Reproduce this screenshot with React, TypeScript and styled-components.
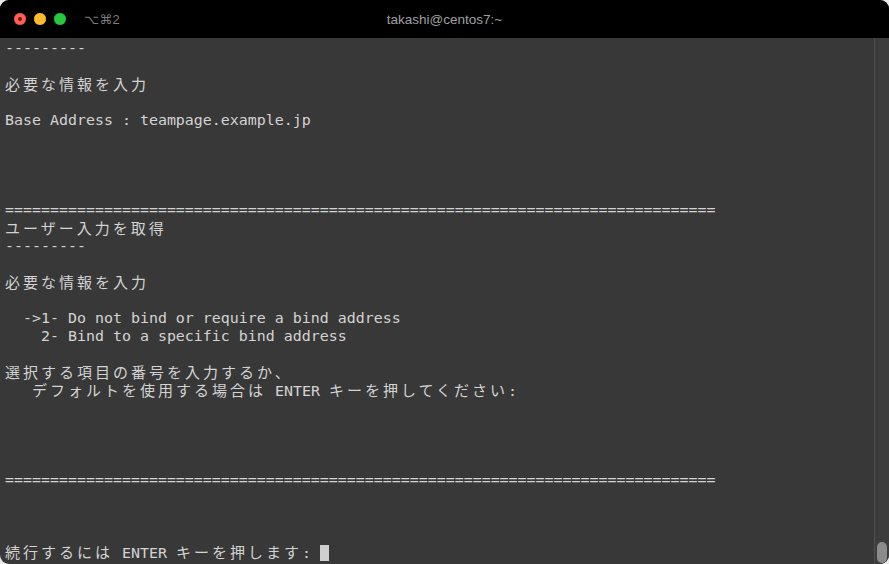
import React from "react";
import styled, { createGlobalStyle } from "styled-components";

const Global = createGlobalStyle`
  html, body { margin: 0; padding: 0; background: #e9e9e9; }
  body { width: 889px; height: 564px; overflow: hidden; }
  #root { width: 889px; height: 564px; }
`;

const Window = styled.div`
  width: 889px;
  height: 564px;
  display: flex;
  flex-direction: column;
  border-radius: 9px;
  overflow: hidden;
  background: #383838;
`;

const TitleBar = styled.div`
  height: 38px;
  flex: none;
  background: #000;
  display: grid;
  grid-template-columns: 1fr auto 1fr;
  align-items: center;
`;

const Left = styled.div`
  display: flex;
  align-items: center;
  padding-left: 14px;
  gap: 8px;
`;

const Light = styled.span<{ $c: string; $b: string }>`
  width: 12px;
  height: 12px;
  border-radius: 50%;
  background: ${(p) => p.$c};
  box-shadow: inset 0 0 0 0.5px ${(p) => p.$b};
  display: flex;
  align-items: center;
  justify-content: center;
  box-sizing: border-box;
`;

const Dot = styled.span`
  width: 4px;
  height: 4px;
  border-radius: 50%;
  background: #7d1610;
`;

const Shortcut = styled.span`
  margin-left: 10px;
  font-family: "Liberation Sans", "DejaVu Sans", sans-serif;
  font-size: 13px;
  color: #7c7c7c;
  letter-spacing: 0.3px;
`;

const Title = styled.div`
  font-family: "Liberation Sans", "Noto Sans", sans-serif;
  font-size: 13.5px;
  color: #a0a0a0;
`;

const Body = styled.div`
  flex: 1;
  display: flex;
  min-height: 0;
`;

const Screen = styled.div`
  flex: 1;
  padding: 1px 0 0 5px;
  font-family: "DejaVu Sans Mono", "Noto Sans CJK JP", monospace;
  font-size: 14.95px;
  color: #d3d3d3;
  overflow: hidden;
`;

const Row = styled.div`
  height: 18px;
  line-height: 18px;
  white-space: pre;
`;

const Wide = styled.span`
  font-family: "Noto Sans CJK JP", sans-serif;
  font-size: 15px;
  letter-spacing: 3px;
`;

const Cursor = styled.span`
  display: inline-block;
  width: 9px;
  height: 16px;
  background: #cfcfcf;
  vertical-align: -3px;
`;

const Track = styled.div`
  width: 14px;
  flex: none;
  border-left: 1px solid #4f4f4f;
  background: #3c3c3c;
  display: flex;
  flex-direction: column;
  justify-content: flex-end;
  align-items: center;
  padding-bottom: 1px;
`;

const Thumb = styled.div`
  width: 10px;
  height: 21px;
  border-radius: 5px;
  background: #8b8b8b;
`;

const eq = "=".repeat(79);

const lines: string[] = [
  "---------",
  "",
  "必要な情報を入力",
  "",
  "Base Address : teampage.example.jp",
  "",
  "",
  "",
  "",
  eq,
  "ユーザー入力を取得",
  "---------",
  "",
  "必要な情報を入力",
  "",
  "  ->1- Do not bind or require a bind address",
  "    2- Bind to a specific bind address",
  "",
  "選択する項目の番号を入力するか、",
  "   デフォルトを使用する場合は ENTER キーを押してください:",
  "",
  "",
  "",
  "",
  eq,
  "",
  "",
  "",
];

const isWide = (ch: string) => /[\u2E80-\uFFEF]/.test(ch);

function renderText(text: string) {
  const parts: React.ReactNode[] = [];
  let buf = "";
  let wide = false;
  const flush = (k: number) => {
    if (!buf) return;
    parts.push(wide ? <Wide key={k}>{buf}</Wide> : <span key={k}>{buf}</span>);
    buf = "";
  };
  Array.from(text).forEach((ch, i) => {
    const w = isWide(ch);
    if (buf && w !== wide) flush(i);
    wide = w;
    buf += ch;
  });
  flush(text.length + 1);
  return parts;
}

export default function App() {
  return (
    <>
      <Global />
      <Window>
        <TitleBar>
          <Left>
            <Light $c="#fe5f57" $b="#e2463f">
              <Dot />
            </Light>
            <Light $c="#febc2e" $b="#dea123" />
            <Light $c="#28c840" $b="#1aab29" />
            <Shortcut>⌥⌘2</Shortcut>
          </Left>
          <Title>takashi@centos7:~</Title>
          <div />
        </TitleBar>
        <Body>
          <Screen>
            {lines.map((l, i) => (
              <Row key={i}>{renderText(l)}</Row>
            ))}
            <Row>
              {renderText("続行するには ENTER キーを押します: ")}
              <Cursor />
            </Row>
          </Screen>
          <Track>
            <Thumb />
          </Track>
        </Body>
      </Window>
    </>
  );
}
